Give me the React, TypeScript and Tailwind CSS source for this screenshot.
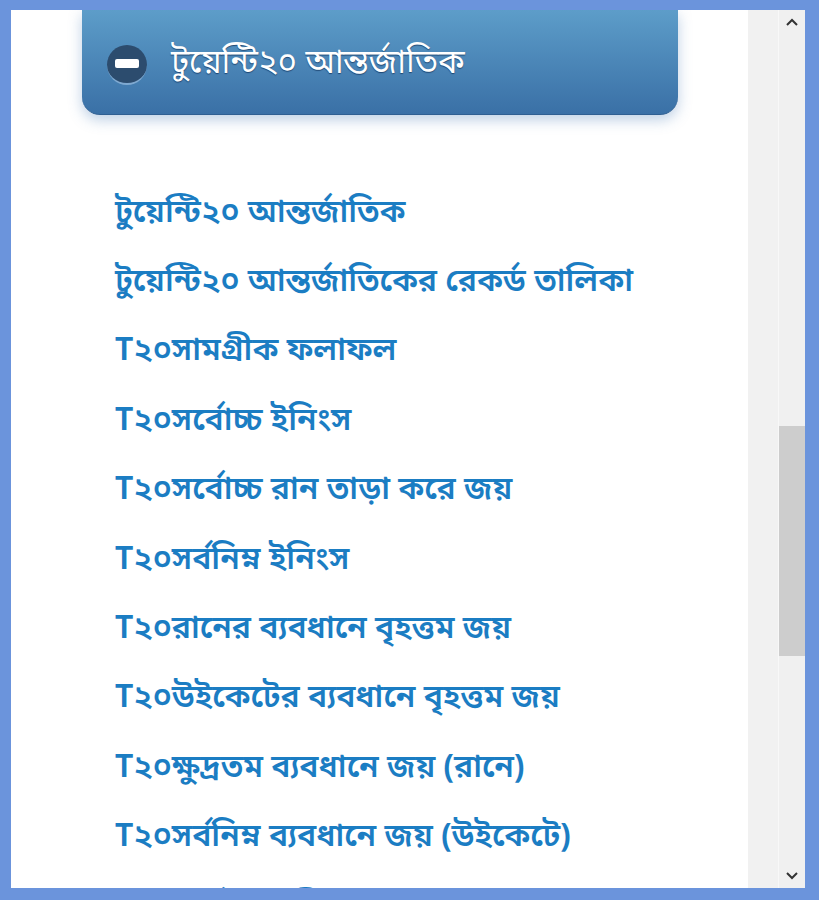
import React from 'react';

const links = [
  'টুয়েন্টি২০ আন্তর্জাতিক',
  'টুয়েন্টি২০ আন্তর্জাতিকের রেকর্ড তালিকা',
  'T২০সামগ্রীক ফলাফল',
  'T২০সর্বোচ্চ ইনিংস',
  'T২০সর্বোচ্চ রান তাড়া করে জয়',
  'T২০সর্বনিম্ন ইনিংস',
  'T২০রানের ব্যবধানে বৃহত্তম জয়',
  'T২০উইকেটের ব্যবধানে বৃহত্তম জয়',
  'T২০ক্ষুদ্রতম ব্যবধানে জয় (রানে)',
  'T২০সর্বনিম্ন ব্যবধানে জয় (উইকেটে)',
  'T২০সর্বোচ্চ দলীয় সংগ্রহ',
];

const bn = { fontFamily: '"Noto Sans Bengali", "Noto Sans", "Liberation Sans", sans-serif' };

export default function App() {
  return (
    <div className="w-[819px] h-[900px] bg-[#6b94dc] pt-[10px] pl-[11px] pr-[14px] pb-[12px]">
      <div className="flex h-full w-full overflow-hidden bg-white">
        {/* Page content */}
        <div className="flex-1 overflow-hidden">
          <div className="ml-[71px] w-[596px] h-[105px] rounded-b-[18px] bg-gradient-to-b from-[#5d9dc9] to-[#3a70a6] shadow-[0_5px_14px_rgba(70,120,180,0.35)] flex items-center pt-[5px] pl-[25px] border-b border-[#2f5f92]">
            <div className="w-[40px] h-[40px] rounded-full bg-[#2c4c6e] border-b-2 border-[#7fa9d1] flex items-center justify-center">
              <div className="w-[24px] h-[9px] rounded-[2px] bg-white" />
            </div>
            <span className="ml-[24px] text-white text-[33px] [text-shadow:0_1px_1px_rgba(0,30,70,0.6)]" style={bn}>
              টুয়েন্টি২০ আন্তর্জাতিক
            </span>
          </div>

          <ul className="mt-[64px] pl-[104px]">
            {links.map((t) => (
              <li key={t} className="h-[69.4px] flex items-center">
                <a className="text-[32px] font-semibold text-[#1b7dc3] whitespace-nowrap" style={bn}>
                  {t}
                </a>
              </li>
            ))}
          </ul>
        </div>

        {/* Side lane + scrollbar */}
        <div className="w-[30px] bg-[#f1f1f1]" />
        <div className="w-[27px] bg-[#f0f0f0] border-l border-[#f8f8f8] flex flex-col items-center">
          <svg className="mt-[8px]" width="14" height="9" viewBox="0 0 14 9">
            <path d="M2 7 L7 2 L12 7" fill="none" stroke="#333" strokeWidth="2" />
          </svg>
          <div className="mt-[399px] w-full h-[230px] bg-[#cdcdcd]" />
          <div className="flex-1" />
          <svg className="mb-[8px]" width="14" height="9" viewBox="0 0 14 9">
            <path d="M2 2 L7 7 L12 2" fill="none" stroke="#333" strokeWidth="2" />
          </svg>
        </div>
      </div>
    </div>
  );
}
